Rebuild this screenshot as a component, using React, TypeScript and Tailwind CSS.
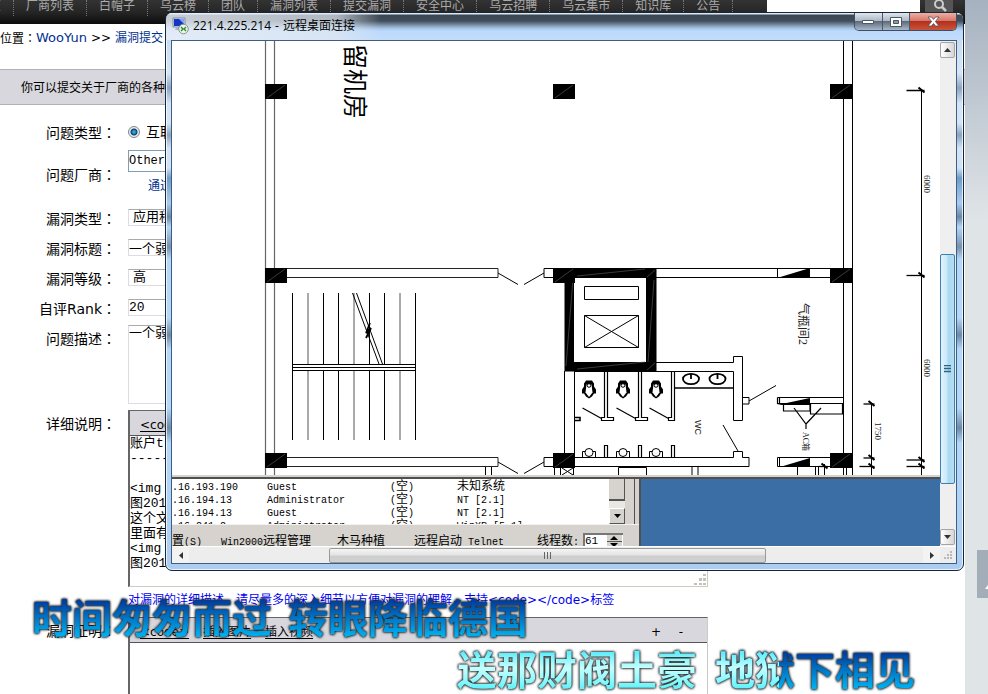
import React from "react";

const ui = "font-['DejaVu_Sans','Noto_Sans_CJK_SC',sans-serif]";
const mono = "font-['Liberation_Mono','Noto_Sans_CJK_SC',monospace]";

const navItems = ["首页", "厂商列表", "白帽子", "乌云榜", "团队", "漏洞列表", "提交漏洞", "安全中心", "乌云招聘", "乌云集市", "知识库", "公告"];

function Header() {
  return (
    <header className="flex h-6 items-start overflow-hidden bg-linear-to-b from-[#333] via-[#262626] to-[#0c0c0c]">
      <nav className="-ml-[35px] flex shrink-0">
        {navItems.map((item, i) => (
          <a
            key={item}
            href="#"
            className={`block h-4 border-r border-dotted border-[#777] px-3 text-xs leading-[12px] whitespace-nowrap ${i === 0 ? "text-[#e08a4a]" : "text-[#aaa]"}`}
          >
            {item}
          </a>
        ))}
      </nav>
      <form className="ml-auto flex pr-3">
        <input aria-label="搜索" className="mr-[5px] h-4 w-[153px] bg-white" />
        <button type="button" aria-label="搜索" className="flex h-4 w-7 justify-center bg-[#555]">
          <svg width="16" height="14" viewBox="0 0 16 14" fill="none" stroke="#ccc">
            <circle cx="8" cy="4" r="4" strokeWidth="2" />
            <path d="M11 7l4 4" strokeWidth="2.5" />
          </svg>
        </button>
      </form>
    </header>
  );
}

function Colon() {
  return <span className="font-['Noto_Sans_CJK_TC',sans-serif]">：</span>;
}

function Row({ id, label, height, leading = "leading-[30px]", children }: { id: string; label: string; height: string; leading?: string; children: React.ReactNode }) {
  return (
    <div className={`flex gap-3 ${height}`}>
      <label htmlFor={id} className={`w-[116px] shrink-0 text-right text-sm whitespace-nowrap ${leading}`}>
        {label}
        <Colon />
      </label>
      <div className="w-[580px] min-w-0">{children}</div>
    </div>
  );
}

function Grip() {
  return (
    <svg width="13" height="13" viewBox="0 0 13 13" fill="#c4c1ba">
      <path d="M9 1h3v2H9zM5 5h3v3H5zM9 5h3v3H9zM0 10h3v2H0zM5 10h3v2H5zM9 10h3v2H9z" />
    </svg>
  );
}

function Editor({ id, text, height }: { id: string; text: string; height: string }) {
  return (
    <div className={`relative flex flex-col border-t border-r border-b border-l-2 border-t-[#666] border-r-[#cfcbc3] border-b-[#cfcbc3] border-l-[#666] ${height}`}>
      <div className="flex h-[25px] shrink-0 items-end gap-3.5 border-b border-[#555] bg-[#d8d7dd] pr-5 pb-0.5 pl-[10px] text-xs leading-4 text-black">
        <button type="button" className="underline underline-offset-2">&lt;code&gt;</button>
        <button type="button" className="underline underline-offset-2">插入图片</button>
        <button type="button" className="underline underline-offset-2">插入视频</button>
        <button type="button" className="ml-auto" aria-label="增大">+</button>
        <button type="button" className="w-3" aria-label="缩小">-</button>
      </div>
      <textarea id={id} defaultValue={text} className={`block w-full grow resize-none overflow-hidden bg-white text-[13px] leading-[15px] outline-none ${mono}`} />
      <div className="absolute right-0 bottom-0">
        <Grip />
      </div>
    </div>
  );
}

function SubmitForm() {
  const field = `block h-[17px] w-[220px] appearance-none border border-[#dcdce6] border-t-[#aaa] bg-white text-[13px] leading-[15px] outline-none ${mono}`;
  return (
    <form className="pt-3">
      <Row id="kind" label="问题类型" height="h-[30px]">
        <div className="flex h-[30px] items-center gap-1.5 text-sm">
          <input
            id="kind"
            type="radio"
            defaultChecked
            className="size-3 appearance-none rounded-full border border-[#7d8790] bg-[radial-gradient(circle,#2fa5dc_0_1px,#123e66_3px,#e8eef2_4px)]"
          />
          <span>互联网</span>
        </div>
      </Row>
      <Row id="vendor" label="问题厂商" height="h-14" leading="leading-[54px]">
        <div className="pt-[3px]">
          <input id="vendor" defaultValue="Other" className={`block h-[22px] w-[220px] border border-[#7f9db9] bg-white text-xs outline-none ${mono}`} />
          <a href="#" className="ml-5 text-xs leading-7 text-[#00308f]">通过</a>
        </div>
      </Row>
      <Row id="type" label="漏洞类型" height="h-[30px]">
        <div className="pt-1.5">
          <select id="type" className={`${field} pl-1`}>
            <option>应用程序</option>
          </select>
        </div>
      </Row>
      <Row id="title" label="漏洞标题" height="h-[30px]">
        <div className="pt-1.5">
          <input id="title" defaultValue="一个弱口令" className={field} />
        </div>
      </Row>
      <Row id="level" label="漏洞等级" height="h-[30px]">
        <div className="pt-1.5">
          <select id="level" className={`${field} pl-1`}>
            <option>高</option>
          </select>
        </div>
      </Row>
      <Row id="rank" label="自评Rank" height="h-[30px]">
        <div className="pt-1.5">
          <input id="rank" defaultValue="20" className={field} />
        </div>
      </Row>
      <Row id="desc" label="问题描述" height="h-[85px]">
        <div className="pt-0.5">
          <textarea
            id="desc"
            defaultValue="一个弱口令"
            className={`block h-[79px] w-[440px] resize-none border border-[#dcdce6] border-t-[#aaa] bg-white text-[13px] leading-[15px] outline-none ${mono}`}
          />
        </div>
      </Row>
      <Row id="detail" label="详细说明" height="h-[207px]">
        <div className="pt-0.5">
          <Editor
            id="detail"
            height="h-[177px]"
            text={"账户t\n--------\n\n<img src=\n图201\n这个文件\n里面有\n<img src=\n图201"}
          />
          <p className="text-xs leading-[26px] whitespace-nowrap text-[#0000f0]">对漏洞的详细描述，请尽量多的深入细节以方便对漏洞的理解，支持&lt;code&gt;&lt;/code&gt;标签</p>
        </div>
      </Row>
      <Row id="proof" label="漏洞证明" height="h-[207px]">
        <div className="pt-0.5">
          <Editor id="proof" height="h-[177px]" text="" />
        </div>
      </Row>
    </form>
  );
}

const stairs = [292.5, 308, 323.5, 338.5, 354, 369.5, 384.5, 400, 415.5];

function Column({ x, y }: { x: number; y: number }) {
  return (
    <g>
      <rect x={x} y={y} width="22" height="15" fill="#000" stroke="none" />
      <path d={`M${x + 2} ${y + 14}L${x + 20} ${y + 1}`} stroke="#555" strokeWidth=".7" />
    </g>
  );
}

function Tick({ x, y, w }: { x: number; y: number; w: number }) {
  return (
    <g>
      <path d={`M${x - w} ${y}H${x + 3}`} strokeWidth="1.3" />
      <path d={`M${x - 3} ${y - 3}l6 5`} strokeWidth="2" />
    </g>
  );
}

function FloorPlan() {
  return (
    <svg viewBox="172 41 768 434" width="768" height="434" className="block shrink-0 bg-white" fill="none" stroke="#000" strokeWidth="1">
      <path d="M265.5 41V475M274.5 41V475" stroke="#666" strokeWidth="1.2" />
      <path d="M843.5 41V475M852.5 41V475" />
      <path d="M287 268.5H498V277.5H287M287 457.5H498V466.5H287" stroke="#222" />
      <path d="M498 273L518 284.5M524 284.5L544 273M498 462L518 473.5M524 473.5L544 462" />
      <path d="M553 268.5H544V277.5H553M553 457.5H544V466.5H553M485.5 467V475M491.5 467V475" />
      <path d="M656 268.5H830M656 277.5H830M777.5 268V278" />
      <path d="M777 278L810 268V278zM777 405L810 398V405zM780 467L810 458V467z" fill="#000" stroke="none" />

      {stairs.map((x, i) => (
        <path key={x} d={`M${x} 293V364M${x} 371V440`} stroke={i % 3 === 1 ? "#555" : "#000"} />
      ))}
      <path d="M292 364.5H416M292 367.5H416M292 370.5H416M292.5 364V371M415.5 364V371M352.5 293L379 364M356.5 293L382.5 364" />
      <path d="M370 323L366 333L371 328L366 338" strokeWidth="1.8" />

      <path d="M564.5 268H656.5V371.5H564.5zM574 278V362H646V278z" fill="#000" fillRule="evenodd" stroke="none" />
      <path d="M566 366L573 279M577 369L645 362M577 276L645 269M648 362L654 280M647 370L655 363M647 277L655 270" stroke="#555" strokeWidth=".7" />
      <path d="M584.5 286.5H638.5V299.5H584.5zM584.5 315.5H638.5V347.5H584.5zM584.5 315.5L638.5 347.5M638.5 315.5L584.5 347.5" />
      <path d="M564.5 371V453M574.5 371V453M656 362.5H733.5V356.5H742.5V420.5H733.5V371.5H574M742.5 397.5H749V404H742.5M749 401L776 385.5" />

      {[604.5, 638.5, 671.5].map((x, i) => (
        <g key={x}>
          <path d={`M${x} 371V417.5H${x - 3}V420.5H${i < 2 ? x + 9 : x + 3}V417.5H${x + 3}V371M${x - 22} 408L${x - 3} 418.5M${x} 457V445.5H${x + 3}V457`} strokeWidth="1.2" />
          <path d={`M${x - 18.5} 380.500h6l2 3v3l2 3v4h-2l-2 3l-3 2l-3-2l-2-3h-2v-4l2-3v-3z`} fill="#000" stroke="none" />
          <path d={`M${x - 18} 384.500l-1 8l3.500 4.500l3.500-4.500l-1-8z`} fill="#fff" stroke="none" />
          <circle cx={x - 15.5} cy="385.500" r="1.8" fill="#fff" />
          <path d={`M${x - 22} 457.5V451.5H${x - 9}V457.5`} />
          <circle cx={x - 15.5} cy="452.5" r="4" fill="#fff" />
        </g>
      ))}
      <path d="M574 417.5H580V420.5H574M675 388H733" strokeWidth="1.6" />
      <ellipse cx="691" cy="379" rx="8" ry="5.2" strokeWidth="1.8" />
      <ellipse cx="717.5" cy="379" rx="8" ry="5.2" strokeWidth="1.8" />
      <path d="M691 374v5M717.5 374v5" strokeWidth="1.8" />
      <path d="M574 457.5H733.5V451.5H742.5V457.5H749V466.5H574M723 425L738 451" />
      <path d="M554.5 467V475M560.5 467V475M561.5 467.5H573.5V475M562 468L573 475M573 468L562 475M618.5 475V467.5H646.5V475M692 467V475M698 467V475" />

      <path d="M777.5 397.5H843M777.5 397.5V403.5H843M779.5 397V404M783.5 404V411H810V404M810 414H842.5V404M810.5 404V414M794 408L806 424L821 408M806 424V429" strokeWidth="1.2" />
      <path d="M777.5 457.5H830M777.5 457.5V466.5H830M779.5 457V467M797.5 467V475M815.5 467V475M818.5 467V475M824.5 464V475M846.5 467V475" />

      <Column x={265} y={84} />
      <Column x={553} y={84} />
      <Column x={830} y={84} />
      <Column x={265} y={268} />
      <Column x={553} y={268} />
      <Column x={830} y={268} />
      <Column x={265} y={453} />
      <Column x={553} y={453} />
      <Column x={830} y={453} />

      <path d="M921.5 90V475M871.5 403V475" />
      <Tick x={921.5} y={90.5} w={15} />
      <Tick x={921.5} y={275.5} w={15} />
      <Tick x={921.5} y={460} w={15} />
      <Tick x={921.5} y={466.5} w={15} />
      <Tick x={871.5} y={404} w={8} />
      <Tick x={871.5} y={458} w={8} />
      <Tick x={871.5} y={466.5} w={12} />
      <Tick x={824.5} y={466.5} w={6} />

      <g stroke="none" fill="#222" className="font-['Liberation_Serif','Noto_Sans_CJK_SC',serif]">
        <text transform="translate(346 44) rotate(90)" fontSize="25" fill="#000">留机房</text>
        <text transform="translate(799 303) rotate(90)" fontSize="12">气瓶间2</text>
        <text transform="translate(803 432) rotate(90)" fontSize="8">AC箱</text>
        <text transform="translate(695 420) rotate(90)" fontSize="9" className="font-['Liberation_Sans',sans-serif]">WC</text>
        <text transform="translate(924 175) rotate(90)" fontSize="9">6000</text>
        <text transform="translate(924 359) rotate(90)" fontSize="9">6000</text>
        <text transform="translate(875 422) rotate(90)" fontSize="9">1750</text>
      </g>
    </svg>
  );
}

const hosts = [
  [".16.193.190", "Guest", "未知系统"],
  [".16.194.13", "Administrator", "NT [2.1]"],
  [".16.194.13", "Guest", "NT [2.1]"],
  [".16.241.2", "Administrator", "WinXP [5.1]"],
];

function Scanner() {
  return (
    <div className={`flex min-h-0 flex-1 bg-[#3a6ea5] text-[10px] text-black ${mono}`}>
      <div className="flex w-[469px] shrink-0 flex-col border-r-2 border-[#505050] bg-[#d6d3ce]">
        <div className="flex h-[46px] shrink-0 border-b border-[#f4f2ee]">
          <div className="h-[45px] flex-1 overflow-hidden bg-white pt-0.5">
            <table className="w-full table-fixed border-collapse">
              <tbody>
                {hosts.map(([ip, user, os], i) => (
                  <tr key={i} className="h-[13px] leading-[13px] whitespace-nowrap">
                    <td className="w-[95px] p-0">{ip}</td>
                    <td className="w-[123px] p-0">{user}</td>
                    <td className="w-[67px] p-0">(<span className="text-xs leading-[0px]">空</span>)</td>
                    <td className="p-0">{i === 0 ? <span className="text-xs leading-[0px]">{os}</span> : os}</td>
                  </tr>
                ))}
              </tbody>
            </table>
          </div>
          <div className="flex w-4 flex-col justify-between bg-[#e9e7e3]">
            <div className="h-[22px] border-r border-b-2 border-[#555] bg-[#d6d3ce]" />
            <button type="button" aria-label="向下" className="flex h-4 items-center justify-center border border-white border-r-[#555] border-b-[#555] bg-[#d6d3ce]">
              <svg width="7" height="4"><path d="M0 0h7L3.5 4z" /></svg>
            </button>
          </div>
          <div className="mr-1 w-[10px] border-r border-[#505050]" />
        </div>
        <div className="flex h-[21px] items-start overflow-hidden pt-2 leading-[20px] whitespace-nowrap">
          <span className="w-[49px]"><span className="text-xs leading-[0px]">置</span>(S)</span>
          <span className="w-[116px]">Win2000<span className="text-xs leading-[0px]">远程管理</span></span>
          <span className="w-[77px]"><span className="text-xs leading-[0px]">木马种植</span></span>
          <span className="w-[123px]"><span className="text-xs leading-[0px]">远程启动</span> Telnet</span>
          <label htmlFor="threads" className="w-[46px]"><span className="text-xs leading-[0px]">线程数</span>:</label>
          <span className="flex h-4 w-10 border-2 border-r-0 border-b-0 border-[#777] bg-white">
            <input id="threads" defaultValue="61" className="h-3 w-[22px] bg-white text-[11px] outline-none" />
            <svg width="15" height="13" viewBox="0 0 15 13">
              <path d="M0 0h15v13H0z" fill="#d6d3ce" />
              <path d="M3 5h8L7 1zM3 8h8l-4 4z" />
              <path d="M0 6.5h15" stroke="#555" />
            </svg>
          </span>
        </div>
      </div>
    </div>
  );
}

function RemoteWindow() {
  return (
    <section
      aria-label="远程桌面连接"
      className="absolute top-3 left-[165px] flex h-[559px] w-[799px] flex-col overflow-hidden rounded-[7px] border border-[#172638] bg-[linear-gradient(180deg,#b9d4ef_0,#d8e6f5_60px,#8ea4bd_75px,#d3e3f5_90px,#d5e5f6_110px,#8aa3bd_122px,#d3e3f5_135px,#cfe2f6_155px,#6e9cc8_165px,#aaccef_190px,#6c86a3_204px,#b3d8f8_214px,#7890ab_234px,#b3d8f8_246px,#b3d8f8_305px,#6e89a6_322px,#b3d8f8_336px,#b3d8f8_395px,#6e89a6_415px,#b3d8f8_430px,#abcdf1_100%)] pr-1.5 pb-1.5 pl-[5px] shadow-[inset_0_0_0_1px_rgba(255,255,255,0.75)]"
    >
      <div className="-mr-1.5 -ml-[5px] flex h-[27px] shrink-0 items-start bg-[linear-gradient(90deg,rgba(235,240,246,0.8)_0,rgba(225,232,240,0.7)_170px,transparent_215px),linear-gradient(180deg,#dce8f2_0_1px,#3a4652_2px,#414d5a_8px,#a3c0de_15px,#badaff_18px,#c4dcf8_27px)] pl-[6px]">
        <svg width="17" height="18" viewBox="0 0 17 18" className="mt-1">
          <path d="M1 1h12v9H1z" fill="#d8e0ea" stroke="#7d8ba0" />
          <path d="M2 2h10v7H2z" fill="#1434c4" />
          <path d="M7 2h5v5z" fill="#7fa4ff" />
          <path d="M4 11h5v2H3z" fill="#aab4c0" />
          <circle cx="11.5" cy="12" r="4.8" fill="#eef3ea" stroke="#87928a" />
          <path d="M9 10l2 2-2 2M14 10l-2 2 2 2" fill="none" stroke="#279034" strokeWidth="1.4" />
        </svg>
        <h1 className="ml-1 flex gap-1 pt-1 text-xs leading-[18px] whitespace-nowrap text-black font-['Open_Sans','Noto_Sans_CJK_SC',sans-serif]">
          <span>221.4.225.214</span>
          <span>-</span>
          <span>远程桌面连接</span>
        </h1>
        <div className="mr-1.5 ml-auto flex h-[18px] overflow-hidden rounded-b-[5px] border border-t-0 border-[#3f4f62]">
          <button type="button" aria-label="最小化" className="flex w-7 items-center justify-center border-r border-[#49596c] bg-[linear-gradient(180deg,#dfe6ed_0,#aeb9c6_45%,#5d6b7b_50%,#a9b8c8_100%)]">
            <svg width="13" height="6"><path d="M.5 1.5h11v3H.5z" fill="#fff" stroke="#4a5766" /></svg>
          </button>
          <button type="button" aria-label="最大化" className="flex w-[27px] items-center justify-center border-r border-[#49596c] bg-[linear-gradient(180deg,#dfe6ed_0,#aeb9c6_45%,#5d6b7b_50%,#a9b8c8_100%)]">
            <svg width="12" height="10"><path d="M.5.5h11v9H.5z" fill="#fff" stroke="#4a5766" /><path d="M3.5 3.5h5v3h-5z" fill="#8a98a8" stroke="#4a5766" /></svg>
          </button>
          <button type="button" aria-label="关闭" className="flex w-[46px] items-center justify-center bg-[linear-gradient(180deg,#eeb0a3_0,#d6776a_45%,#b3301c_50%,#c9543c_100%)]">
            <svg width="13" height="11" viewBox="0 0 13 11">
              <path d="M1 1h3.5l2 2.4L8.500 1H12L8.400 5.500 12 10H8.500l-2-2.500L4.500 10H1l3.600-4.500z" fill="#fff" stroke="#5b4a55" strokeWidth=".8" />
            </svg>
          </button>
        </div>
      </div>
      <div className="flex min-h-0 flex-1 flex-col border border-[#3d5f86] bg-[#f0f0f0]">
        <div className="flex min-h-0 flex-1">
          <div className="flex min-w-0 flex-1 flex-col overflow-hidden">
            <FloorPlan />
            <div className="h-1 shrink-0 border-b-2 border-[#505050] bg-[#d6d3ce]" />
            <Scanner />
          </div>
          <div className="flex w-4 shrink-0 flex-col bg-[#efefef] py-px pr-px">
            <button type="button" aria-label="向上滚动" className="flex h-4 shrink-0 items-center justify-center rounded-[2px] border border-[#a5a5a5] bg-linear-to-r from-white to-[#d6d6d6]">
              <svg width="7" height="4"><path d="M0 4h7L3.500 0z" fill="#333" /></svg>
            </button>
            <div className="mt-[196px] flex h-[230px] shrink-0 items-center justify-center rounded-[2px] border border-[#3c7fb1] bg-[linear-gradient(90deg,#e2f3fc_0,#cbe8f8_45%,#a8d8f0_55%,#b5dff5_100%)]">
              <svg width="7" height="8" stroke="#2f6480"><path d="M0 .5h7M0 3.500h7M0 6.500h7" strokeWidth="1.500" /></svg>
            </div>
            <button type="button" aria-label="向下滚动" className="mt-auto flex h-4 shrink-0 items-center justify-center rounded-[2px] border border-[#a5a5a5] bg-linear-to-r from-white to-[#d6d6d6]">
              <svg width="7" height="4"><path d="M0 0h7L3.500 4z" fill="#333" /></svg>
            </button>
          </div>
        </div>
        <div className="flex h-[17px] shrink-0 items-center border-t border-white bg-[#ededed]">
          <button type="button" aria-label="向左滚动" className="flex h-4 w-[17px] items-center justify-center bg-[#f3f3f3]">
            <svg width="4" height="7"><path d="M4 0v7L0 3.500z" fill="#333" /></svg>
          </button>
          <div className="ml-[140px] flex h-[15px] w-[437px] items-center justify-center rounded-[2px] border border-[#999] bg-[linear-gradient(180deg,#f5f5f5_0,#e4e4e4_45%,#cdcdcd_55%,#d2d2d2_100%)]">
            <svg width="8" height="7" stroke="#666"><path d="M.5 0v7M3.500 0v7M6.500 0v7" /></svg>
          </div>
          <button type="button" aria-label="向右滚动" className="ml-auto flex h-4 w-[17px] items-center justify-center bg-[#f3f3f3]">
            <svg width="4" height="7"><path d="M0 0v7l4-3.500z" fill="#333" /></svg>
          </button>
          <div className="flex h-4 w-4 items-end justify-center pb-1">
            <svg width="8" height="8" fill="#b8b8b8"><path d="M6 0h2v2H6zM3 3h2v2H3zM6 3h2v2H6zM0 6h2v2H0zM3 6h2v2H3zM6 6h2v2H6z" /></svg>
          </div>
        </div>
      </div>
    </section>
  );
}

const lyric = "block bg-clip-text text-[40px] leading-[48px] font-bold text-transparent font-['Noto_Sans_CJK_SC',sans-serif]";
const deep = "bg-linear-to-b from-[#003f9e] from-20% to-[#00aeef] to-90%";
const pale = "bg-linear-to-b from-[#62eefa] from-20% via-[#c4ffff] to-[#66f4fa] to-90%";
const glow = "[filter:drop-shadow(0_0_1px_#222)_drop-shadow(0_0_1px_#222)]";

export default function App() {
  return (
    <div className={`relative h-screen overflow-hidden bg-white text-black ${ui}`}>
      <div className="flex h-full">
        <main className="h-full min-w-0 flex-1 overflow-hidden">
          <Header />
          <p className="-ml-6 flex h-[45px] gap-1 pt-1 text-xs leading-5 whitespace-nowrap">
            <span>
              当前位置
              <Colon />
            </span>
            <a href="#" className="-ml-1 text-[13px] text-[#00308f]">WooYun</a>
            <span>&gt;&gt;</span>
            <a href="#" className="text-[#00308f]">漏洞提交</a>
          </p>
          <p className="h-9 border-y border-[#b2b2b6] bg-[#d8d7dd] pl-[21px] text-xs leading-9">你可以提交关于厂商的各种</p>
          <SubmitForm />
        </main>
        <aside className="flex w-[23px] shrink-0 flex-col items-end bg-[linear-gradient(180deg,#a6b2c0_0,#dfe4e7_220px)]">
          <button type="button" aria-label="返回顶部" className="mt-[550px] flex h-12 w-[11px] items-end justify-end bg-[#a3adb7] pb-[9px]">
            <svg width="3" height="4"><path d="M0 4L3 0v4z" fill="#fff" /></svg>
          </button>
        </aside>
      </div>

      <RemoteWindow />

      <div className={`pointer-events-none absolute top-[592px] left-8 flex gap-4 whitespace-nowrap ${glow}`}>
        <span className={`${lyric} ${deep}`}>时间匆匆而过</span>
        <span className={`${lyric} ${deep}`}>转眼降临德国</span>
      </div>
      <div className={`pointer-events-none absolute top-[644px] left-[457px] flex gap-[18px] whitespace-nowrap ${glow}`}>
        <span className={`${lyric} ${pale}`}>送那财阀土豪</span>
        <span className={`${lyric} bg-[linear-gradient(180deg,#62eefa_20%,#c4ffff_50%,#66f4fa_90%),linear-gradient(180deg,#003f9e_20%,#00aeef_90%)] bg-[length:64px_100%,100%_100%] bg-no-repeat`}>地狱下相见</span>
      </div>
    </div>
  );
}
